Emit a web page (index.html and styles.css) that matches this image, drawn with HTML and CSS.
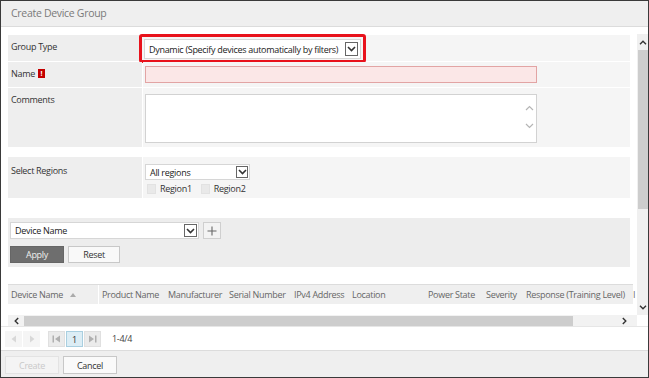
FILE: index.html
```html
<!DOCTYPE html>
<html>
<head>
<meta charset="utf-8">
<link rel="stylesheet" href="styles.css">
</head>
<body>
<div class="dialog">
  <div class="titlebar">Create Device Group</div>
  <div class="main">
    <div class="scroller">
      <div class="viewport">
        <div class="form">
          <div class="lab">Group Type</div>
          <div class="val">
            <span class="highlight">
              <span class="select sel-type">
                <span class="sel-text">Dynamic (Specify devices automatically by filters)</span>
                <span class="arrowbox"><svg width="9" height="6" viewBox="0 0 9 6"><path d="M1 1 L4.5 4.5 L8 1" stroke="#333" stroke-width="1.6" fill="none"/></svg></span>
              </span>
            </span>
          </div>
          <div class="lab">Name <span class="badge">!</span></div>
          <div class="val"><span class="input-err"></span></div>
          <div class="lab">Comments</div>
          <div class="val">
            <span class="textarea">
              <span class="ta-scroll">
                <svg width="9" height="6" viewBox="0 0 9 6"><path d="M1 5 L4.5 1.5 L8 5" stroke="#b5b5b5" stroke-width="1.2" fill="none"/></svg>
                <svg width="9" height="6" viewBox="0 0 9 6"><path d="M1 1 L4.5 4.5 L8 1" stroke="#b5b5b5" stroke-width="1.2" fill="none"/></svg>
              </span>
            </span>
          </div>
        </div>

        <div class="form regions">
          <div class="lab lab-reg">Select Regions</div>
          <div class="val val-reg">
            <span class="select sel-reg">
              <span class="sel-text">All regions</span>
              <span class="arrowbox"><svg width="9" height="6" viewBox="0 0 9 6"><path d="M1 1 L4.5 4.5 L8 1" stroke="#333" stroke-width="1.6" fill="none"/></svg></span>
            </span>
            <div class="checks">
              <span class="cb"></span><span class="cb-label">Region1</span>
              <span class="cb"></span><span class="cb-label">Region2</span>
            </div>
          </div>
        </div>

        <div class="filter">
          <div class="filter-row">
            <span class="select sel-dev">
              <span class="sel-text">Device Name</span>
              <span class="arrowbox"><svg width="9" height="6" viewBox="0 0 9 6"><path d="M1 1 L4.5 4.5 L8 1" stroke="#333" stroke-width="1.6" fill="none"/></svg></span>
            </span>
            <span class="plus"><svg width="10" height="10" viewBox="0 0 10 10"><path d="M5 0.5 V9.5 M0.5 5 H9.5" stroke="#666" stroke-width="1.1"/></svg></span>
          </div>
          <div class="filter-row btns">
            <span class="btn btn-apply">Apply</span>
            <span class="btn btn-reset">Reset</span>
          </div>
        </div>

        <div class="thead">
          <span class="th c1">Device Name <span class="sort"></span></span>
          <span class="th c2">Product Name</span>
          <span class="th c3">Manufacturer</span>
          <span class="th c4">Serial Number</span>
          <span class="th c5">IPv4 Address</span>
          <span class="th c6">Location</span>
          <span class="th c7">Power State</span>
          <span class="th c8">Severity</span>
          <span class="th c9">Response (Training Level)</span>
          <span class="th c10">I</span>
        </div>
        <div class="tbody"></div>
      </div>
      <div class="vscroll">
        <span class="sarrow"><svg width="8" height="5" viewBox="0 0 8 5"><path d="M1 4.2 L4 1.2 L7 4.2" stroke="#333" stroke-width="1.4" fill="none"/></svg></span>
        <span class="vthumb"></span>
        <span class="vfill"></span>
        <span class="sarrow"><svg width="8" height="5" viewBox="0 0 8 5"><path d="M1 0.8 L4 3.8 L7 0.8" stroke="#333" stroke-width="1.4" fill="none"/></svg></span>
      </div>
      <div class="hscroll">
        <span class="harrow"><svg width="5" height="8" viewBox="0 0 5 8"><path d="M4.2 1 L1.2 4 L4.2 7" stroke="#333" stroke-width="1.4" fill="none"/></svg></span>
        <span class="hthumb"></span>
        <span class="hfill"></span>
        <span class="harrow"><svg width="5" height="8" viewBox="0 0 5 8"><path d="M0.8 1 L3.8 4 L0.8 7" stroke="#333" stroke-width="1.4" fill="none"/></svg></span>
      </div>
      <div class="corner"></div>
    </div>
    <div class="pager">
      <span class="pgroup">
        <span class="pbtn pdis"><svg width="6" height="8" viewBox="0 0 6 8"><path d="M5 0.5 V7.5 L0.5 4 Z" fill="#d8d8d8"/></svg></span>
        <span class="pbtn pdis"><svg width="6" height="8" viewBox="0 0 6 8"><path d="M1 0.5 V7.5 L5.5 4 Z" fill="#d8d8d8"/></svg></span>
      </span>
      <span class="pgroup pages">
        <span class="pbtn pnav"><svg width="9" height="8" viewBox="0 0 9 8"><path d="M0.5 0.5 H2 V7.5 H0.5 Z M8 0.5 V7.5 L3 4 Z" fill="#b0b0b0"/></svg></span>
        <span class="pbtn pcur">1</span>
        <span class="pbtn pnav"><svg width="9" height="8" viewBox="0 0 9 8"><path d="M7 0.5 H8.5 V7.5 H7 Z M1 0.5 V7.5 L6 4 Z" fill="#b0b0b0"/></svg></span>
      </span>
      <span class="pcount">1-4/4</span>
    </div>
  </div>
  <div class="footer">
    <span class="btn fbtn fdis">Create</span>
    <span class="btn fbtn">Cancel</span>
  </div>
</div>
</body>
</html>
```

FILE: styles.css
```css
* { box-sizing: border-box; }
html, body { margin: 0; padding: 0; background: #fff; }
body {
  font-family: "Open Sans", "Noto Sans", sans-serif;
  font-size: 9px;
  letter-spacing: -0.3px;
  color: #333;
}
.dialog {
  width: 649px;
  height: 378px;
  border: 1px solid #3a3a3a;
  display: flex;
  flex-direction: column;
  background: #fff;
  overflow: hidden;
}
.titlebar {
  height: 26px;
  flex: none;
  background: #efefef;
  border-bottom: 1px solid #dcdcdc;
  padding-left: 10px;
  font-size: 10.5px;
  line-height: 25px;
  color: #7a7a7a;
}
.main {
  flex: 1;
  display: flex;
  flex-direction: column;
  padding-top: 7px;
}
.scroller {
  margin-left: 7px;
  height: 292px;
  display: grid;
  grid-template-columns: 1fr 11px;
  grid-template-rows: 281px 11px;
}
.viewport {
  overflow: hidden;
  padding-top: 1px;
  display: flex;
  flex-direction: column;
}
.form {
  width: 622px;
  display: grid;
  grid-template-columns: 134px 1fr;
  grid-template-rows: 26px 25px 59px;
  column-gap: 1px;
  row-gap: 1px;
  background: #fff;
}
.lab {
  background: #eeeeee;
  padding: 6px 0 0 3px;
  line-height: 12px;
  display: flex;
  align-items: flex-start;
}
.val {
  background: #f5f5f5;
  padding-left: 2px;
  display: flex;
  flex-direction: column;
  align-items: flex-start;
}
.badge {
  display: inline-block;
  width: 7px;
  height: 9px;
  margin: 1px 0 0 3px;
  background: #c40000;
  color: #fff;
  font-size: 7px;
  line-height: 9px;
  text-align: center;
  font-weight: bold;
  letter-spacing: 0;
}
.highlight {
  display: inline-flex;
  margin: -1px 0 0 -6px;
  border: 3px solid #e8121c;
  border-radius: 3px;
  padding: 2px 2px 1px 2px;
  background: #f5f5f5;
}
.select {
  display: inline-flex;
  align-items: center;
  justify-content: space-between;
  background: #fff;
  border: 1px solid #d6d6d6;
}
.sel-text { padding-left: 4px; white-space: nowrap; color: #222; }
.arrowbox {
  display: inline-flex;
  align-items: center;
  justify-content: center;
  width: 13px;
  height: 14px;
  border: 1px solid #666;
  background: #fff;
  margin-right: 2px;
}
.sel-type { width: 217px; height: 20px; }
.input-err {
  margin-top: 4px;
  width: 392px;
  height: 17px;
  background: #fbe7e7;
  border: 1px solid #e2a4a4;
}
.textarea {
  margin-top: 6px;
  width: 392px;
  height: 49px;
  background: #fff;
  border: 1px solid #d2d2d2;
  display: flex;
  justify-content: flex-end;
}
.ta-scroll {
  width: 14px;
  display: flex;
  flex-direction: column;
  align-items: center;
  padding-top: 10px;
  gap: 12px;
}
.regions {
  margin-top: 10px;
  grid-template-rows: 41px;
}
.lab-reg { padding-top: 8px; }
.val-reg { padding-top: 7px; }
.sel-reg { width: 105px; height: 16px; }
.sel-reg .arrowbox { height: 12px; width: 12px; margin-right: 1px; }
.checks {
  display: flex;
  align-items: center;
  margin-top: 3px;
  height: 11px;
  padding-left: 2px;
}
.cb {
  width: 9px;
  height: 10px;
  background: #e9e9e9;
  border: 1px solid #e2e2e2;
}
.cb-label { margin: 0 9px 0 4px; line-height: 11px; }
.filter {
  margin-top: 20px;
  width: 622px;
  height: 49px;
  background: #ededed;
  padding: 4px 0 0 2px;
}
.filter-row { display: flex; align-items: center; gap: 4px; }
.sel-dev { width: 189px; height: 17px; }
.sel-dev .arrowbox { height: 13px; width: 13px; margin-right: 1px; }
.plus {
  width: 18px;
  height: 17px;
  display: inline-flex;
  align-items: center;
  justify-content: center;
  background: #f3f3f3;
  border: 1px solid #cfcfcf;
}
.btns { margin-top: 7px; }
.btn {
  display: inline-flex;
  align-items: center;
  justify-content: center;
  height: 17px;
  border: 1px solid #c8c8c8;
  background: #f9f9f9;
  color: #333;
}
.btn-apply { width: 54px; background: #6e6e6e; border-color: #666; color: #eee; }
.btn-reset { width: 52px; }
.thead {
  margin-top: 17px;
  height: 20px;
  width: 625px;
  display: flex;
  background: #efefef;
  border-top: 1px solid #dcdcdc;
  color: #666;
  white-space: nowrap;
}
.th {
  flex: none;
  padding-left: 3px;
  line-height: 19px;
  overflow: hidden;
}
.c1 { width: 91px; border-right: 1px solid #fff; }
.c2 { width: 66px; }
.c3 { width: 61px; }
.c4 { width: 65px; }
.c5 { width: 58px; }
.c6 { width: 76px; }
.c7 { width: 58px; }
.c8 { width: 40px; }
.c9 { width: 107px; }
.c10 { width: 6px; }
.sort {
  display: inline-block;
  width: 0; height: 0;
  margin-left: 5px;
  border-left: 3px solid transparent;
  border-right: 3px solid transparent;
  border-bottom: 4px solid #aaa;
  vertical-align: 1px;
}
.tbody { height: 10px; flex: none; }
.vscroll {
  background: #f0f0f0;
  display: flex;
  flex-direction: column;
  align-items: center;
}
.sarrow {
  height: 16px;
  display: flex;
  align-items: center;
  justify-content: center;
  width: 11px;
}
.vthumb {
  width: 10px;
  margin-left: 1px;
  height: 159px;
  background: #cdcdcd;
}
.vfill { flex: 1; }
.hscroll {
  background: #f2f2f2;
  display: flex;
  align-items: center;
}
.harrow {
  width: 16px;
  height: 11px;
  display: flex;
  align-items: center;
  justify-content: center;
}
.hthumb {
  width: 549px;
  height: 10px;
  background: #cdcdcd;
}
.hfill { flex: 1; }
.hscroll .harrow:last-child { width: 20px; justify-content: flex-start; padding-left: 5px; }
.corner { background: #fff; }
.pager {
  border-top: 1px solid #e6e6e6;
  flex: 1;
  display: flex;
  align-items: flex-start;
  padding: 4px 0 0 4px;
}
.pgroup { display: flex; gap: 1px; }
.pages { margin-left: 8px; }
.pbtn {
  width: 17px;
  height: 16px;
  display: inline-flex;
  align-items: center;
  justify-content: center;
}
.pdis { background: #f5f5f5; }
.pnav { background: #ebebeb; border: 1px solid #e0e0e0; }
.pcur { background: #dcedf5; border: 1px solid #a9cfe0; color: #333; }
.pcount { margin-left: 11px; line-height: 16px; color: #444; }
.footer {
  flex: none;
  height: 27px;
  background: #efefef;
  border-top: 1px solid #dcdcdc;
  display: flex;
  align-items: flex-start;
  gap: 4px;
  padding: 5px 0 0 4px;
}
.fbtn { width: 54px; height: 18px; background: #fafafa; }
.fdis { color: #c9c9c9; border-color: #e3e3e3; background: #f4f4f4; }
```
